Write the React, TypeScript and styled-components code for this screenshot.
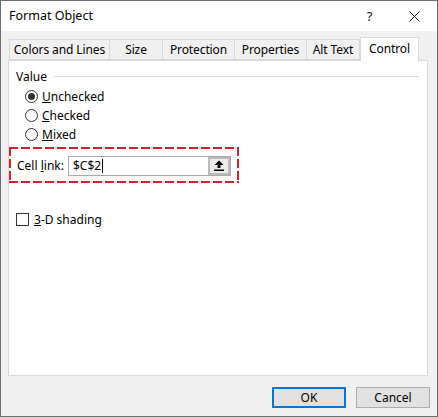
import { createGlobalStyle } from "styled-components"
import styled from "styled-components"

const GlobalStyle = createGlobalStyle`
  html, body {
    margin: 0;
    padding: 0;
    background: #ffffff;
  }
  * {
    box-sizing: border-box;
  }
`

const Window = styled.div`
  width: 438px;
  height: 417px;
  border: 1px solid #6e6e6e;
  display: flex;
  flex-direction: column;
  font-family: "Noto Sans", "Open Sans", sans-serif;
  font-size: 12px;
  color: #000;
  overflow: hidden;
`

const TitleBar = styled.div`
  height: 30px;
  background: #fff;
  display: flex;
  align-items: center;
  padding-left: 8px;
`

const Title = styled.div`
  flex: 1;
  font-size: 12.5px;
  padding-bottom: 1px;
`

const TitleButton = styled.div`
  width: 45px;
  height: 30px;
  display: flex;
  align-items: center;
  justify-content: center;
  font-size: 13px;
  color: #111;
`

const Body = styled.div`
  flex: 1;
  background: #f0f0f0;
  display: flex;
  flex-direction: column;
  padding: 6px 9px 0 7px;
`

const TabStrip = styled.div`
  display: flex;
  align-items: flex-end;
  height: 23px;
  padding-left: 1px;
  position: relative;
  z-index: 1;
`

const Tab = styled.div<{ $w: number; $active?: boolean; $first?: boolean }>`
  width: ${(p) => p.$w}px;
  height: ${(p) => (p.$active ? 24 : 21)}px;
  margin-bottom: ${(p) => (p.$active ? -1 : 0)}px;
  background: ${(p) => (p.$active ? "#fff" : "#f0f0f0")};
  border: 1px solid #d9d9d9;
  border-bottom: ${(p) => (p.$active ? "none" : "1px solid #d9d9d9")};
  border-left: ${(p) => (p.$first || p.$active ? "1px solid #d9d9d9" : "none")};
  display: flex;
  align-items: center;
  justify-content: center;
  padding-bottom: ${(p) => (p.$active ? 3 : 1)}px;
  white-space: nowrap;
  letter-spacing: -0.1px;
`

const Panel = styled.div`
  height: 316px;
  background: #fff;
  border: 1px solid #d9d9d9;
  display: flex;
  flex-direction: column;
  padding-top: 7px;
`

const GroupHeader = styled.div`
  display: flex;
  align-items: center;
  gap: 7px;
  padding: 0 8px 0 7px;
  height: 16px;
`

const GroupLine = styled.div`
  flex: 1;
  height: 1px;
  background: #dcdcdc;
`

const RadioList = styled.div`
  display: flex;
  flex-direction: column;
  padding-left: 16px;
  margin-top: 3px;
`

const OptionRow = styled.label`
  display: flex;
  align-items: center;
  height: 19px;
  gap: 4px;
`

const RadioCircle = styled.span<{ $on?: boolean }>`
  width: 13px;
  height: 13px;
  border-radius: 50%;
  border: 1px solid #333;
  background: #fff;
  display: flex;
  align-items: center;
  justify-content: center;

  &::after {
    content: "";
    width: 7px;
    height: 7px;
    border-radius: 50%;
    background: ${(p) => (p.$on ? "#333" : "transparent")};
  }
`

// red dashed annotation round the cell-link row
const Highlight = styled.div`
  margin-top: 3px;
  width: 230px;
  height: 36px;
  display: flex;
  align-items: center;
  padding: 1px 0 0 8px;
  background:
    linear-gradient(90deg, #d2232a 75%, transparent 0) top left / 12px 2px repeat-x,
    linear-gradient(90deg, #d2232a 75%, transparent 0) bottom left / 12px 2px repeat-x,
    linear-gradient(180deg, #d2232a 75%, transparent 0) top left / 2px 12px repeat-y,
    linear-gradient(180deg, #d2232a 75%, transparent 0) top right / 2px 12px repeat-y;
`

const FieldLabel = styled.span`
  width: 51px;
`

const RefInput = styled.div`
  width: 163px;
  height: 20px;
  border: 1px solid #a9a9a9;
  display: flex;
  align-items: center;
  background: #fff;
  padding-left: 4px;
`

const InputText = styled.span`
  flex: 1;
  display: flex;
  align-items: center;
`

const Caret = styled.span`
  width: 1px;
  height: 14px;
  background: #000;
  margin-left: 1px;
`

const CollapseButton = styled.div`
  width: 22px;
  height: 18px;
  border: 2px solid #bcbcbc;
  background: #ececec;
  display: flex;
  align-items: center;
  justify-content: center;
`

const CheckRow = styled.label`
  display: flex;
  align-items: center;
  height: 19px;
  gap: 5px;
  margin-top: 27px;
  padding-left: 7px;
`

const CheckBox = styled.span`
  width: 13px;
  height: 13px;
  border: 1px solid #333;
  background: #fff;
`

const Footer = styled.div`
  display: flex;
  justify-content: flex-end;
  gap: 10px;
  padding-top: 11px;
  margin-right: -2px;
`

const Button = styled.div<{ $default?: boolean }>`
  width: 74px;
  height: 21px;
  background: #e1e1e1;
  border: ${(p) => (p.$default ? "2px solid #0078d7" : "1px solid #adadad")};
  display: flex;
  align-items: center;
  justify-content: center;
`

const tabs = [
  { label: "Colors and Lines", w: 101 },
  { label: "Size", w: 53 },
  { label: "Protection", w: 72 },
  { label: "Properties", w: 72 },
  { label: "Alt Text", w: 53 },
  { label: "Control", w: 59, active: true }
]

const options = [
  { key: "U", rest: "nchecked", on: true },
  { key: "C", rest: "hecked" },
  { key: "M", rest: "ixed" }
]

const App = () => {
  return (
    <>
      <GlobalStyle />
      <Window>
        <TitleBar>
          <Title>Format Object</Title>
          <TitleButton>?</TitleButton>
          <TitleButton>
            <svg width="11" height="11" viewBox="0 0 11 11">
              <path d="M0.5 0.5 L10.5 10.5 M10.5 0.5 L0.5 10.5" stroke="#111" strokeWidth="1" />
            </svg>
          </TitleButton>
        </TitleBar>

        <Body>
          <TabStrip>
            {tabs.map((t, i) => (
              <Tab key={t.label} $w={t.w} $active={t.active} $first={i === 0}>
                {t.label}
              </Tab>
            ))}
          </TabStrip>

          <Panel>
            <GroupHeader>
              Value
              <GroupLine />
            </GroupHeader>

            <RadioList>
              {options.map((o) => (
                <OptionRow key={o.key}>
                  <RadioCircle $on={o.on} />
                  <span>
                    <u>{o.key}</u>
                    {o.rest}
                  </span>
                </OptionRow>
              ))}
            </RadioList>

            <Highlight>
              <FieldLabel>
                Cell <u>l</u>ink:
              </FieldLabel>
              <RefInput>
                <InputText>
                  $C$2
                  <Caret />
                </InputText>
                <CollapseButton>
                  <svg width="10" height="11" viewBox="0 0 10 11">
                    <path d="M5 0.5 L9.5 5 L6.5 5 L6.5 8 L3.5 8 L3.5 5 L0.5 5 Z" fill="#000" />
                    <rect x="0" y="9.5" width="10" height="1.5" fill="#000" />
                  </svg>
                </CollapseButton>
              </RefInput>
            </Highlight>

            <CheckRow>
              <CheckBox />
              <span>
                <u>3</u>-D shading
              </span>
            </CheckRow>
          </Panel>

          <Footer>
            <Button $default>OK</Button>
            <Button>Cancel</Button>
          </Footer>
        </Body>
      </Window>
    </>
  )
}

export default App
